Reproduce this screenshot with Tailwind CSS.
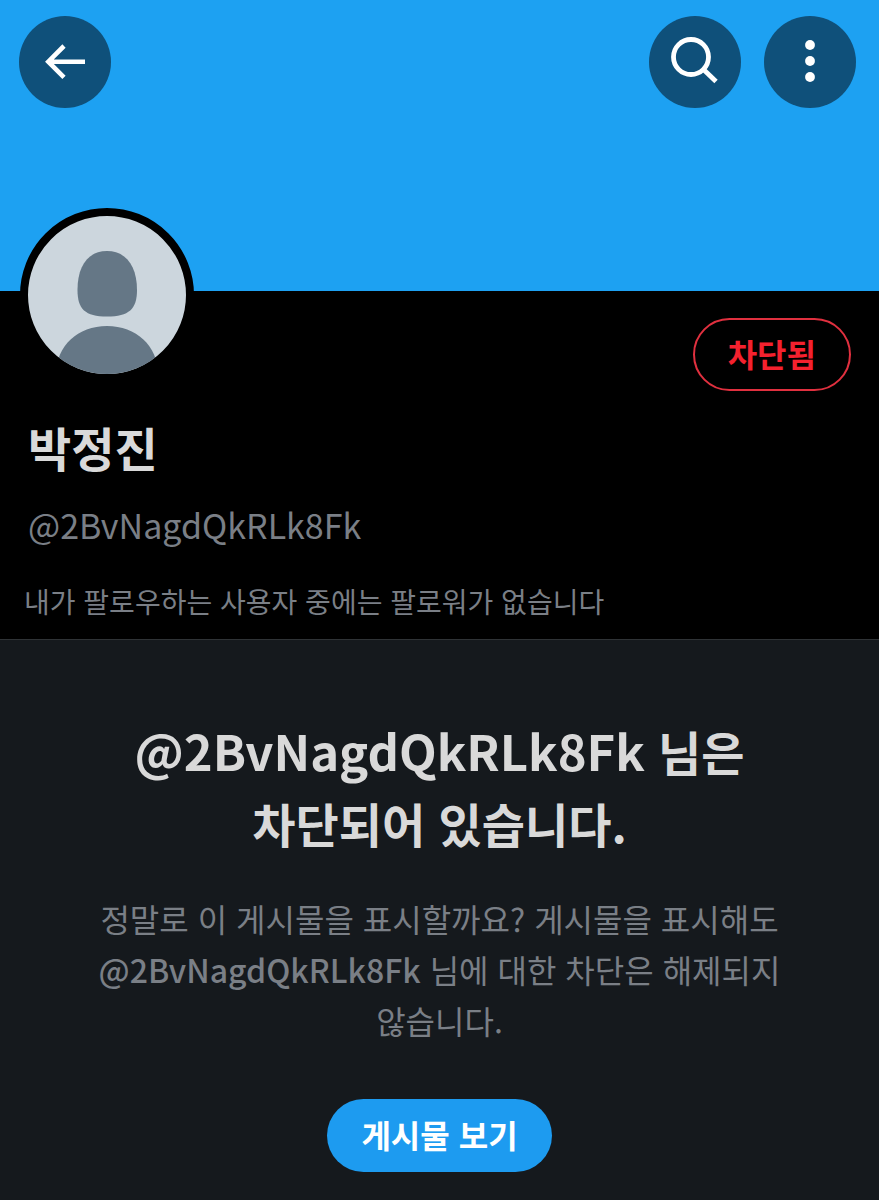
<!DOCTYPE html>
<html lang="ko">
<head>
    <meta charset="UTF-8">
    <meta name="viewport" content="width=device-width, initial-scale=1.0">
    <title>박정진 (@2BvNagdQkRLk8Fk)</title>
    <script src="https://cdn.jsdelivr.net/npm/@tailwindcss/browser@4"></script>
</head>
<body class="flex min-h-screen flex-col bg-black font-['Noto_Sans_CJK_KR',sans-serif] text-[#d9d9d9]">
    <!-- Banner -->
    <header class="flex h-[291px] items-start justify-between bg-[#1da1f2] pt-4 pr-[23px] pl-[19px]">
        <button type="button" aria-label="뒤로" class="size-[92px] rounded-full bg-[#0f507a]">
            <svg class="size-full" viewBox="0 0 92 92" fill="none" stroke="#fff" stroke-width="4.6" aria-hidden="true">
                <path d="M66 45.7H29M45 30L29.3 45.7L45 61.4" />
            </svg>
        </button>
        <div class="flex gap-[23px]">
            <button type="button" aria-label="검색" class="size-[92px] rounded-full bg-[#0f507a]">
                <svg class="size-full" viewBox="0 0 92 92" fill="none" stroke="#fff" stroke-width="4.8" aria-hidden="true">
                    <circle cx="42" cy="41" r="17.5" />
                    <path d="M54 53L67 65.5" />
                </svg>
            </button>
            <button type="button" aria-label="더 보기" class="size-[92px] rounded-full bg-[#0f507a]">
                <svg class="size-full" viewBox="0 0 92 92" fill="#fff" aria-hidden="true">
                    <circle cx="46" cy="29" r="4.9" />
                    <circle cx="46" cy="45" r="4.9" />
                    <circle cx="46" cy="61" r="4.9" />
                </svg>
            </button>
        </div>
    </header>

    <!-- Profile -->
    <section class="border-b border-[#2f3336] px-7 pb-3">
        <div class="flex items-start justify-between">
            <div class="-mt-[83px] -ml-2 size-[174px] overflow-hidden rounded-full border-8 border-black bg-[#ccd6dd]">
                <svg class="size-full" viewBox="0 0 158 158" fill="#657786" role="img" aria-label="프로필 사진">
                    <path d="M79 35C98 35 109 50 109 74C109 93 101 100.5 79 100.5C57 100.5 49.5 93 49.5 74C49.5 50 60 35 79 35Z" />
                    <path d="M28 158C28 130 50 110 79 110C108 110 130 130 130 158Z" />
                </svg>
            </div>
            <button type="button" class="mt-[27px] h-[73px] rounded-full border-2 border-[#e0303f] px-[33px] pb-1 text-[32px] leading-none font-bold text-[#f4212e]">차단됨</button>
        </div>
        <h1 class="mt-5 text-[47px] leading-[72px] font-bold">박정진</h1>
        <p class="mt-4 text-[34px] leading-[51px] text-[#7a7f86]">@2BvNagdQkRLk8Fk</p>
        <p class="-ml-1 mt-[26px] text-[28px] leading-[51px] text-[#7a7f86]">내가 팔로우하는 사용자 중에는 팔로워가 없습니다</p>
    </section>

    <!-- Blocked notice -->
    <main class="flex flex-1 flex-col items-center bg-[#15191d] px-20 pt-[74px] pb-7 text-center">
        <h2 class="text-[47px] leading-[72px] font-bold"><span class="text-[49px]">@2BvNagdQkRLk8Fk</span> 님은<br>차단되어 있습니다.</h2>
        <p class="mt-[34px] text-[32px] leading-[51px] break-keep text-[#7a7f86]">정말로 이 게시물을 표시할까요? 게시물을 표시해도<br><b class="font-medium">@2BvNagdQkRLk8Fk</b> 님에 대한 차단은 해제되지<br>않습니다.</p>
        <button type="button" class="mt-[53px] h-[73px] rounded-full bg-[#1d9bf0] px-[34px] pb-1 text-[32px] leading-none font-bold text-white">게시물 보기</button>
    </main>
</body>
</html>
